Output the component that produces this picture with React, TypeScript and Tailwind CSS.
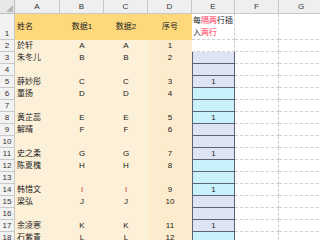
const cols = ["A", "B", "C", "D", "E", "F", "G"];

// 每组两人 + 一个空行
const data: (string[] | null)[] = [
  ["於轩", "A", "A", "1"],
  ["朱冬儿", "B", "B", "2"],
  null,
  ["薛妙彤", "C", "C", "3"],
  ["董扬", "D", "D", "4"],
  null,
  ["黄芷蕊", "E", "E", "5"],
  ["解晴", "F", "F", "6"],
  null,
  ["史之柔", "G", "G", "7"],
  ["陈夏槐", "H", "H", "8"],
  null,
  ["韩惜文", "I", "I", "9"],
  ["梁弘", "J", "J", "10"],
  null,
  ["余凌寒", "K", "K", "11"],
  ["石紫青", "L", "L", "12"],
];

const grid = "border-r border-b border-dashed border-[#cfcfcf] bg-white";

function RowHead({ n }: { n: number }) {
  return (
    <div className="flex items-end justify-center border-r border-b border-[#c8c8c8] bg-[#f2f2f2] text-[8px] leading-[11px] text-[#333]">
      {n}
    </div>
  );
}

function ECell({ row }: { row: number }) {
  if (row === 2) return <div className={grid} />;
  const lavender = Math.floor((row - 3) / 3) % 2 === 0;
  const one = (row - 5) % 3 === 0;
  return (
    <div
      className={
        lavender
          ? "flex items-center justify-center border-x border-b border-[#5c6270] bg-[#dfe4f4] text-[8px] text-[#222]"
          : "flex items-center justify-center border-x border-b border-[#5c6270] bg-[#c9f1fb] text-[8px] text-[#222]"
      }
    >
      {one ? "1" : ""}
    </div>
  );
}

export default function App() {
  return (
    <div className="h-[240px] w-[320px] overflow-hidden bg-white font-['Liberation_Sans','Noto_Sans_CJK_SC',sans-serif]">
      <div className="grid w-[324px] grid-cols-[15px_45px_44px_44px_44px_43px_44px_45px] grid-rows-[14px_26px_repeat(17,12px)]">
        {/* 列标题 */}
        <div className="relative border-r border-b border-[#bdbdbd] bg-[#e8e8e8]">
          <svg className="absolute right-[1px] bottom-[1px]" width="7" height="7" viewBox="0 0 7 7">
            <polygon points="7,0 7,7 0,7" fill="#b8b8b8" />
          </svg>
        </div>
        {cols.map((c) => (
          <div
            key={c}
            className="flex items-center justify-center border-r border-b border-[#c8c8c8] bg-[#efefef] text-[8px] text-[#333]"
          >
            {c}
          </div>
        ))}

        {/* 第1行：表头 */}
        <RowHead n={1} />
        <div className="flex items-center bg-[#fed97c] pl-[2px] text-[8px] text-[#222]">姓名</div>
        <div className="flex items-center justify-center bg-[#fed97c] text-[8px] text-[#222]">数据1</div>
        <div className="flex items-center justify-center bg-[#fed97c] text-[8px] text-[#222]">数据2</div>
        <div className="flex items-center justify-center bg-[#fed97c] text-[8px] text-[#222]">序号</div>
        <div className={`${grid} flex items-center pl-[1px] text-[8px] leading-[12px] text-[#222]`}>
          <span>
            每<span className="text-[#ff2d55]">隔两</span>行插入<span className="text-[#ff2d55]">两行</span>
          </span>
        </div>
        <div className={grid} />
        <div className={grid} />

        {data.map((r, i) => {
          const row = i + 2;
          const red = r?.[1] === "I";
          return [
            <RowHead key={`h${row}`} n={row} />,
            <div key={`a${row}`} className="flex items-center bg-[#fdf0d8] pl-[2px] text-[8px] text-[#222]">
              {r?.[0]}
            </div>,
            <div
              key={`b${row}`}
              className={
                red
                  ? "flex items-center justify-center bg-[#fdf0d8] text-[8px] text-[#d42020]"
                  : "flex items-center justify-center bg-[#fdf0d8] text-[8px] text-[#222]"
              }
            >
              {r?.[1]}
            </div>,
            <div
              key={`c${row}`}
              className={
                red
                  ? "flex items-center justify-center bg-[#fdf0d8] text-[8px] text-[#d42020]"
                  : "flex items-center justify-center bg-[#fdf0d8] text-[8px] text-[#222]"
              }
            >
              {r?.[2]}
            </div>,
            <div key={`d${row}`} className="flex items-center justify-center bg-[#fcebcd] text-[8px] text-[#222]">
              {r?.[3]}
            </div>,
            <ECell key={`e${row}`} row={row} />,
            <div key={`f${row}`} className={grid} />,
            <div key={`g${row}`} className={grid} />,
          ];
        })}
      </div>
    </div>
  );
}
